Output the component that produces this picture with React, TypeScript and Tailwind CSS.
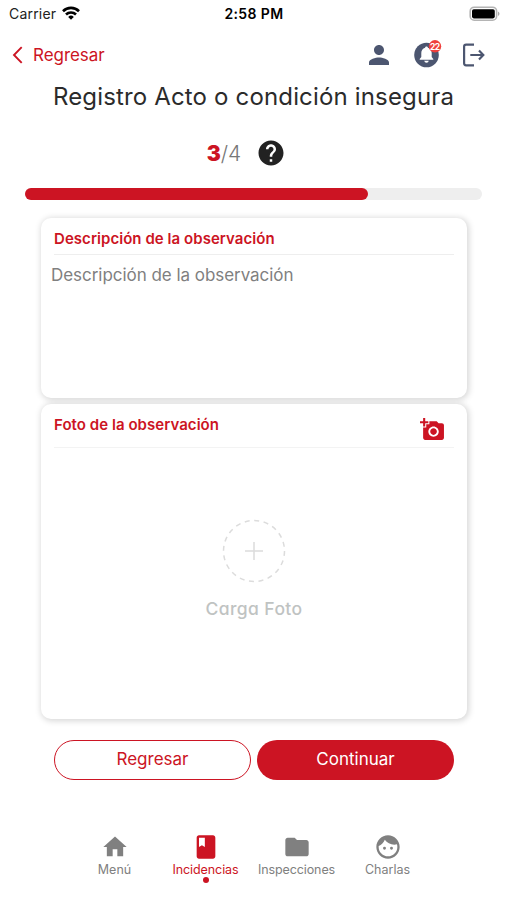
import { MdAddAPhoto, MdBook, MdFolder, MdHelp, MdHome, MdPerson } from "react-icons/md";

function FaceIcon({ size, className }: { size: number; className?: string }) {
  return (
    <svg className={className} width={size} height={size} viewBox="0 0 24 24" fill="currentColor">
      <path d="M9 11.75A1.25 1.25 0 1 0 9 14.25 1.25 1.25 0 0 0 9 11.75ZM15 11.75A1.25 1.25 0 1 0 15 14.25 1.25 1.25 0 0 0 15 11.75Z" />
      <path d="M12 2C6.480 2 2 6.480 2 12s4.480 10 10 10 10-4.480 10-10S17.520 2 12 2Zm0 18c-4.410 0-8-3.590-8-8 0-.29.02-.58.05-.86 2.360-1.050 4.230-2.980 5.210-5.370C11.070 8.330 14.050 10 17.420 10c.78 0 1.530-.09 2.250-.26.21.71.33 1.470.33 2.260 0 4.410-3.590 8-8 8Z" />
    </svg>
  );
}

const tabs = [
  { label: "Menú", Icon: MdHome, active: false, spacing: "tracking-[0px]" },
  { label: "Incidencias", Icon: MdBook, active: true, spacing: "tracking-[-0.08px]" },
  { label: "Inspecciones", Icon: MdFolder, active: false, spacing: "tracking-[-0.1px]" },
  { label: "Charlas", Icon: FaceIcon, active: false, spacing: "tracking-[0px]" },
];

function StatusBar() {
  return (
    <div className="grid h-7 grid-cols-3 items-center pr-[7px] pl-[9px] text-[14px] leading-none text-[#222]">
      <div className="flex items-center gap-[6px]">
        <span className="tracking-[0.2px]">Carrier</span>
        <svg className="-mt-[2px]" width="18" height="14" viewBox="0 0 18 14" fill="none" stroke="#000" strokeWidth="2.6">
          <path d="M1 5.2a11.4 11.4 0 0 1 16 0" />
          <path d="M4 8.5a7.1 7.1 0 0 1 10 0" />
          <path d="M9 13.7 6.2 10.9a4 4 0 0 1 5.6 0Z" fill="#000" stroke="none" />
        </svg>
      </div>
      <div className="pr-[1px] text-center font-semibold tracking-[0.4px] whitespace-nowrap text-black">2:58 PM</div>
      <svg className="-mt-[1px] justify-self-end" width="31" height="16" viewBox="0 0 31 16">
        <rect x="1.2" y="1.2" width="26.4" height="13" rx="4" fill="#fff" stroke="#b4b4b4" strokeWidth="1.6" />
        <rect x="3" y="3.2" width="22.8" height="9.2" rx="1.8" fill="#000" />
        <path d="M29 5.5q3 2.2 0 4.5Z" fill="#aaa" />
      </svg>
    </div>
  );
}

function Header() {
  return (
    <header className="flex h-[54px] items-center justify-between pr-[22px] pl-[12px]">
      <button className="flex items-center gap-[10px] text-[17px] text-[#cc1423]">
        <svg width="11" height="18" viewBox="0 0 11 18" fill="none" stroke="currentColor" strokeWidth="1.9">
          <path d="M9.7 1.2 2 9l7.7 7.8" />
        </svg>
        <span className="pt-px tracking-[-0.05px]">Regresar</span>
      </button>
      <div className="flex items-center text-[#4c5670]">
        <MdPerson size={30} />
        <svg className="ml-[20px]" width="28" height="30" viewBox="0 0 28 30">
          <circle cx="12.5" cy="15" r="12.3" fill="#4c5670" />
          <path d="M12.5 6.400c-.9 0-1.400.6-1.400 1.400-2.500.7-3.800 2.700-3.800 5.200v4.100L5.700 18.900v.8h13.600v-.8l-1.600-1.800V13c0-2.500-1.300-4.500-3.800-5.200 0-.8-.5-1.400-1.400-1.400ZM10.200 20.800a2.350 2.350 0 0 0 4.600 0Z" fill="#fff" />
          <circle cx="21" cy="6.300" r="6.200" fill="#ef3f3c" />
          <text x="21" y="9.500" textAnchor="middle" fontSize="8.500" fontWeight="700" fill="#fff" fontFamily="Inter, sans-serif" textLength="10">22</text>
        </svg>
        <svg className="ml-[20px]" width="23" height="24" viewBox="0 0 23 24" fill="none" stroke="currentColor" strokeWidth="2.200">
          <path d="M12 1.700H4.100Q2.100 1.700 2.100 3.700v16.600q0 2 2 2H12M8.300 12H21.300M17 7.600l4.300 4.400-4.300 4.400" />
        </svg>
      </div>
    </header>
  );
}

export default function App() {
  return (
    <div className="flex h-[900px] w-[507px] flex-col overflow-hidden bg-white font-['Inter',sans-serif]">
      <StatusBar />
      <Header />
      <h1 className="h-[30px] text-center text-[24px] leading-[30px] tracking-[0.16px] whitespace-nowrap text-[#2b2b2b]">
        Registro Acto o condición insegura
      </h1>
      <div className="mt-[26px] flex h-[30px] items-center justify-center pr-[14px] text-[21px] leading-none">
        <span className="font-black text-[#cc1423]">3</span>
        <span className="font-light text-[#777]">/4</span>
        <MdHelp className="ml-[15px] text-[#222]" size={30} />
      </div>
      <div className="mt-[20px] mr-[25px] ml-[25px] h-[12px] shrink-0 rounded-full bg-[#eee]">
        <div className="h-full w-3/4 rounded-full bg-[#cc1423]" />
      </div>

      <section className="mt-[18px] mr-[40px] ml-[41px] h-[180px] shrink-0 rounded-[10px] bg-white px-[13px] shadow-[1px_1px_6px_1px_rgba(0,0,0,0.16)]">
        <h2 className="flex h-[37px] items-center border-b border-[#eee] pt-[7px] text-[15px] font-semibold tracking-[0.05px] text-[#cc1423]">
          Descripción de la observación
        </h2>
        <textarea
          className="-ml-[3px] block h-[130px] w-full resize-none bg-transparent pt-[7px] text-[17px] leading-[26px] tracking-[-0.04px] outline-none placeholder:text-[#808080]"
          placeholder="Descripción de la observación"
        />
      </section>

      <section className="mt-[6px] mr-[40px] ml-[41px] h-[315px] shrink-0 rounded-[10px] bg-white px-[13px] shadow-[1px_1px_6px_1px_rgba(0,0,0,0.16)]">
        <div className="flex h-[44px] items-center justify-between border-b border-[#f3f3f3] pr-[9px] text-[#cc1423]">
          <h2 className="text-[15px] font-semibold tracking-[0.05px]">Foto de la observación</h2>
          <MdAddAPhoto className="mt-[7px]" size={25} />
        </div>
        <div className="flex flex-col items-center pt-[71px]">
          <svg width="64" height="64" viewBox="0 0 64 64" fill="none" stroke="#dcdcdc" strokeWidth="1.500">
            <circle cx="32" cy="32" r="30.500" strokeDasharray="5 4.580" />
            <path d="M32 23v18M23 32h18" />
          </svg>
          <span className="mt-[14px] text-[17.500px] leading-[24px] font-medium tracking-[0.4px] text-[#bfc3c2] [font-feature-settings:'cv11']">
            Carga Foto
          </span>
        </div>
      </section>

      <div className="mt-[21px] mr-[53px] ml-[54px] grid h-[40px] shrink-0 grid-cols-2 gap-[6px] text-[17px]">
        <button className="rounded-full border-[1.500px] border-[#cc1423] text-[#cc1423]">Regresar</button>
        <button className="rounded-full bg-[#cc1423] text-white">Continuar</button>
      </div>

      <nav className="mt-[52px] ml-[69px] grid w-[364px] grid-cols-4">
        {tabs.map(({ label, Icon, active, spacing }) => (
          <a key={label} className={`flex flex-col items-center ${active ? "text-[#cc1423]" : "text-[#808080]"}`}>
            <Icon className="mt-[1px] mb-px" size={28} />
            <span className={`text-[12.500px] leading-[16px] ${spacing}`}>{label}</span>
            {active && <i className="-mt-px h-[6px] w-[6px] rounded-full bg-[#cc1423]" />}
          </a>
        ))}
      </nav>
    </div>
  );
}
